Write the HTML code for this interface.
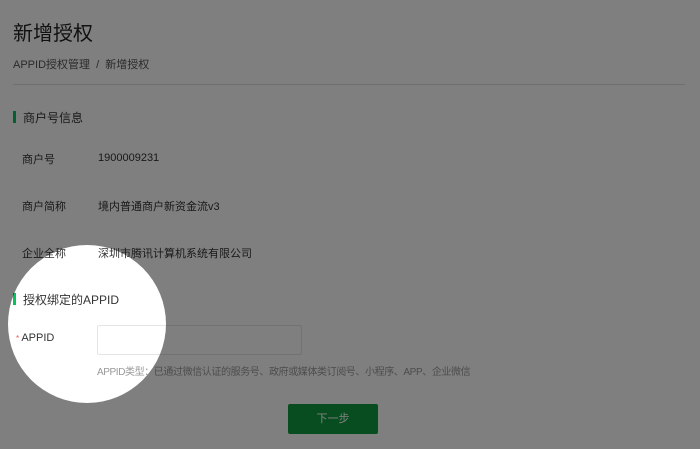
<!DOCTYPE html><html><head><meta charset="utf-8"><style>
body{margin:0;width:700px;height:449px;overflow:hidden;background:#fff;font-family:"Liberation Sans","Noto Sans CJK SC",sans-serif;color:#333;position:relative}
.a{position:absolute;white-space:nowrap}
.bar{position:absolute;width:3px;height:12px;background:#07c160}
.ov{position:absolute;left:8px;top:245px;width:158px;height:158px;border-radius:50%;box-shadow:0 0 0 1400px rgba(0,0,0,.5)}
</style></head><body>
<div class="a" style="left:13px;top:17px;font-size:20px;color:#222">新增授权</div>
<div class="a" style="left:13px;top:56px;font-size:11px;color:#555">APPID授权管理 &nbsp;/&nbsp; 新增授权</div>
<div style="position:absolute;left:13px;top:84px;width:672px;height:1px;background:#ddd"></div>
<div class="bar" style="left:13px;top:111px"></div>
<div class="a" style="left:23px;top:109px;font-size:12px">商户号信息</div>
<div class="a" style="left:22px;top:151px;font-size:11px">商户号</div>
<div class="a" style="left:98px;top:152px;font-size:11px">1900009231</div>
<div class="a" style="left:22px;top:198px;font-size:11px">商户简称</div>
<div class="a" style="left:98px;top:198px;font-size:11px">境内普通商户新资金流v3</div>
<div class="a" style="left:22px;top:245px;font-size:11px">企业全称</div>
<div class="a" style="left:98px;top:245px;font-size:11px">深圳市腾讯计算机系统有限公司</div>
<div class="bar" style="left:13px;top:293px"></div>
<div class="a" style="left:23px;top:291px;font-size:12px">授权绑定的APPID</div>
<div class="a" style="left:16px;top:332px;font-size:11px"><span style="color:#e55;font-size:8px">* </span>APPID</div>
<div style="position:absolute;left:97px;top:325px;width:203px;height:28px;border:1px solid #e5e5e5;border-radius:2px"></div>
<div class="a" style="left:97px;top:363px;font-size:10px;letter-spacing:-0.4px;color:#999">APPID类型：已通过微信认证的服务号、政府或媒体类订阅号、小程序、APP、企业微信</div>
<div style="position:absolute;left:288px;top:404px;width:90px;height:30px;background:#109a40;border-radius:2px;color:#fff;font-size:11px;text-align:center;line-height:30px">下一步</div>
<div class="ov"></div>
</body></html>
